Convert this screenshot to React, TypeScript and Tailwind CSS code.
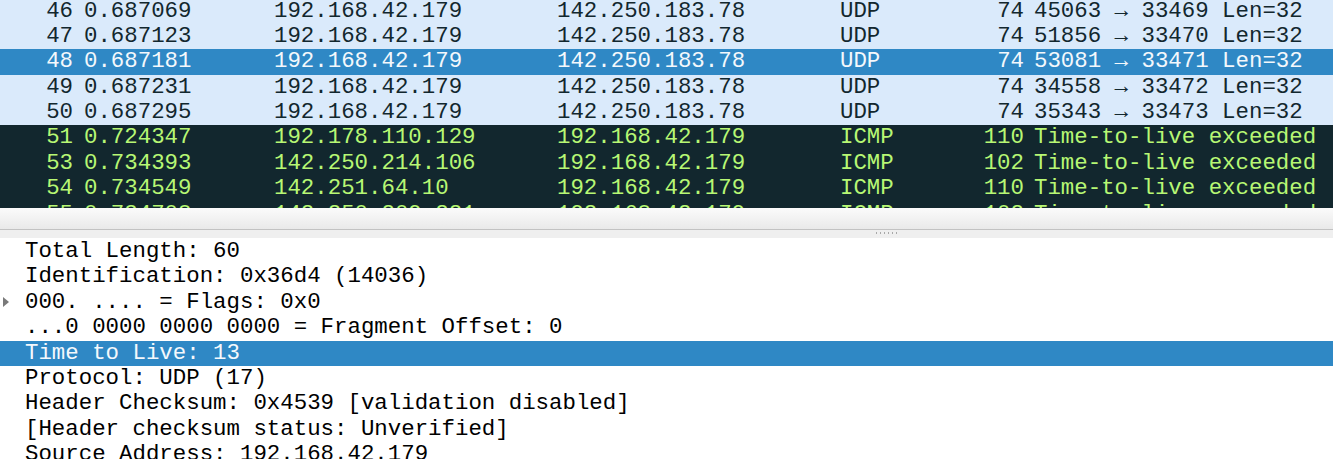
import React from 'react';

type Packet = {
  no: number;
  time: string;
  src: string;
  dst: string;
  proto: string;
  len: number;
  info: string;
  kind: 'udp' | 'ttl';
};

const packets: Packet[] = [
  { no: 46, time: '0.687069', src: '192.168.42.179', dst: '142.250.183.78', proto: 'UDP', len: 74, info: '45063 → 33469 Len=32', kind: 'udp' },
  { no: 47, time: '0.687123', src: '192.168.42.179', dst: '142.250.183.78', proto: 'UDP', len: 74, info: '51856 → 33470 Len=32', kind: 'udp' },
  { no: 48, time: '0.687181', src: '192.168.42.179', dst: '142.250.183.78', proto: 'UDP', len: 74, info: '53081 → 33471 Len=32', kind: 'udp' },
  { no: 49, time: '0.687231', src: '192.168.42.179', dst: '142.250.183.78', proto: 'UDP', len: 74, info: '34558 → 33472 Len=32', kind: 'udp' },
  { no: 50, time: '0.687295', src: '192.168.42.179', dst: '142.250.183.78', proto: 'UDP', len: 74, info: '35343 → 33473 Len=32', kind: 'udp' },
  { no: 51, time: '0.724347', src: '192.178.110.129', dst: '192.168.42.179', proto: 'ICMP', len: 110, info: 'Time-to-live exceeded', kind: 'ttl' },
  { no: 53, time: '0.734393', src: '142.250.214.106', dst: '192.168.42.179', proto: 'ICMP', len: 102, info: 'Time-to-live exceeded', kind: 'ttl' },
  { no: 54, time: '0.734549', src: '142.251.64.10', dst: '192.168.42.179', proto: 'ICMP', len: 110, info: 'Time-to-live exceeded', kind: 'ttl' },
  { no: 55, time: '0.734708', src: '142.250.209.221', dst: '192.168.42.179', proto: 'ICMP', len: 102, info: 'Time-to-live exceeded', kind: 'ttl' },
];

const selectedNo = 48;

const details = [
  { text: 'Total Length: 60' },
  { text: 'Identification: 0x36d4 (14036)' },
  { text: '000. .... = Flags: 0x0', expandable: true },
  { text: '...0 0000 0000 0000 = Fragment Offset: 0' },
  { text: 'Time to Live: 13', selected: true },
  { text: 'Protocol: UDP (17)' },
  { text: 'Header Checksum: 0x4539 [validation disabled]' },
  { text: '[Header checksum status: Unverified]' },
  { text: 'Source Address: 192.168.42.179' },
];

function PacketRow({ p }: { p: Packet }) {
  const selected = p.no === selectedNo;
  const tone = selected
    ? 'bg-[#2f88c5] text-[#f4f8fc]'
    : p.kind === 'udp'
      ? 'bg-[#daeafb] text-[#12272e]'
      : 'bg-[#12272e] text-[#b7f774]';

  return (
    <div className={`flex h-[25.4px] leading-[25.4px] whitespace-pre ${tone}`}>
      <div className="w-[73px] text-right">{p.no}</div>
      <div className="w-[190px] ml-[11px]">{p.time}</div>
      <div className="w-[283px]">{p.src}</div>
      <div className="w-[283px]">{p.dst}</div>
      <div className="w-[184px] text-right">
        <span className="float-left">{p.proto}</span>
        {p.len}
      </div>
      <div className="ml-[10px] flex-1">{p.info}</div>
    </div>
  );
}

function Grip() {
  return (
    <div className="flex gap-[3px] items-center">
      {[0, 1, 2, 3, 4, 5].map((i) => (
        <div key={i} className="w-[1px] h-[2px] bg-[#a8a8a8]" />
      ))}
    </div>
  );
}

export default function App() {
  return (
    <div className="w-[1333px] h-[459px] overflow-hidden bg-white font-['Liberation_Mono',monospace] text-[22.4px]">
      <div className="h-[208px] overflow-hidden bg-[#12272e]">
        <div className="-mt-[1.5px]">
          {packets.map((p) => (
            <PacketRow key={p.no} p={p} />
          ))}
        </div>
      </div>
      <div className="h-[21px] bg-gradient-to-b from-[#fbfbfb] to-[#e9e9e9] border-b border-[#c2c2c2] box-content" />
      <div className="h-[8px] bg-[#efefef] flex justify-center pl-[440px] items-start pt-[2px]">
        <Grip />
      </div>
      <div className="text-black pt-[1px]">
        {details.map((d, i) => (
          <div
            key={i}
            className={`flex items-center h-[25.4px] leading-[25.4px] whitespace-pre ${
              d.selected ? 'bg-[#2f88c5] text-[#f4f8fc]' : ''
            }`}
          >
            <div className="w-[25px] flex items-center pl-[3px]">
              {d.expandable && (
                <svg width="7" height="10" viewBox="0 0 7 10">
                  <path d="M0 0 L6 5 L0 10 Z" fill="#7a7a7a" />
                </svg>
              )}
            </div>
            <span>{d.text}</span>
          </div>
        ))}
      </div>
    </div>
  );
}
